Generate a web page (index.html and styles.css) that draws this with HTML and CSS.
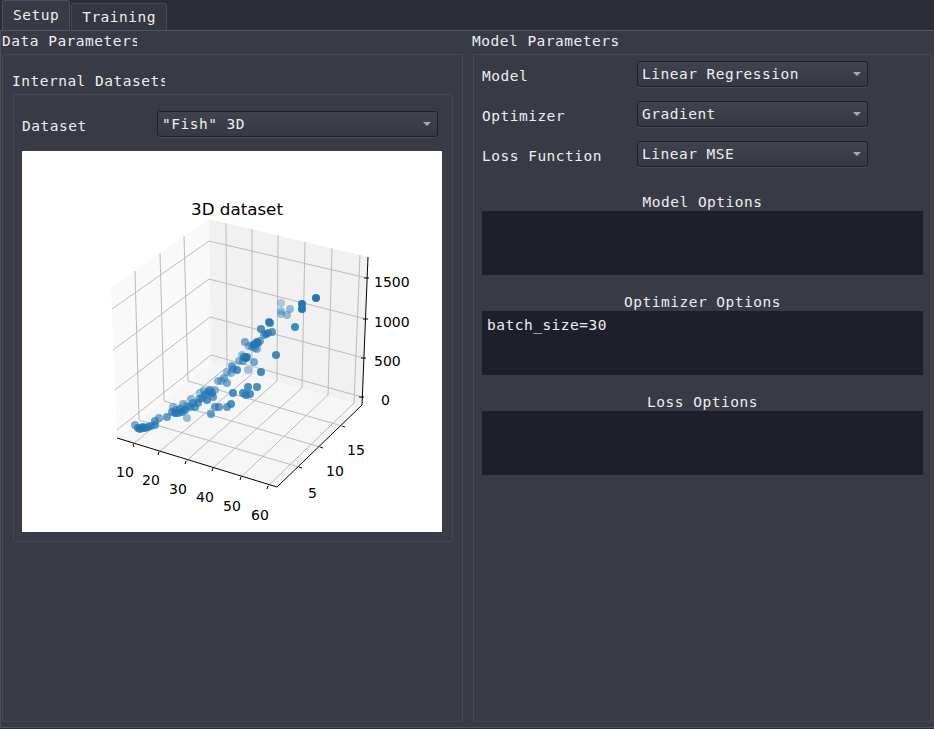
FILE: index.html
```html
<!DOCTYPE html>
<html lang="en">
<head>
    <meta charset="UTF-8">
    <title>Setup</title>
    <link rel="stylesheet" href="styles.css">
</head>
<body>
    <div class="tabbar">
        <div class="tab active">Setup</div>
        <div class="tab">Training</div>
    </div>

    <div class="pane">
        <section class="column">
            <div class="group-title data-title">Data Parameters</div>
            <div class="frame data-frame">
                <div class="group-title inner-title">Internal Datasets</div>
                <div class="frame inner-frame">
                    <div class="row dataset-row">
                        <label class="field-label">Dataset</label>
                        <div class="combo dataset-combo">"Fish" 3D</div>
                    </div>
                    <svg class="plot" viewBox="22 151 420 381" width="420" height="381">
                        <rect x="22" y="151" width="420" height="381" fill="#fff"/>
                        <polygon points="111,287 209,219 211,363 117,438" fill="#f9f9f9"/>
                        <polygon points="209,219 368,257 362,405 211,363" fill="#f1f1f1"/>
                        <polygon points="211,363 362,405 277,487 117,438" fill="#f6f6f6"/>

                        <g class="grid">
                            <path d="M209 241L367 278M209 279L366 319M210 317L364 358M211 355L362 397"/>
                            <path d="M209 241L112 309M209 279L113 350M210 317L115 390M211 355L117 430"/>
                            <path d="M226 223L227 367M252 229L252 374M278 235L277 381M305 242L302 388M332 248L328 395M360 255L354 403"/>
                            <path d="M135 271L139 420M160 253L164 401M184 236L188 381"/>
                            <path d="M299 467L139 420M320 447L164 401M342 426L188 381"/>
                            <path d="M133 444L227 367M159 452L252 374M186 461L277 381M213 468L302 388M241 477L328 395M268 486L354 403"/>
                        </g>

                        <g class="axis">
                            <path d="M117 438L277 487L362 405L368 257"/>
                            <path d="M133 444L134 447M159 452L158 455M186 461L185 464M213 468L212 471M241 477L240 480M268 486L267 489"/>
                            <path d="M299 467L302 468M320 447L323 448M342 426L345 427"/>
                            <path d="M364 278L369 278M363 319L368 319M361 358L366 358M359 397L364 397"/>
                        </g>

                        <g class="dots">
                            <circle cx="281" cy="303" r="4" opacity=".35"/>
                            <circle cx="290" cy="309" r="4" opacity=".45"/>
                            <circle cx="281" cy="311" r="4" opacity=".4"/>
                            <circle cx="281" cy="314" r="4" opacity=".4"/>
                            <circle cx="287" cy="315" r="4" opacity=".45"/>
                            <circle cx="316" cy="298" r="4"/>
                            <circle cx="302" cy="304" r="4"/>
                            <circle cx="302" cy="309" r="4"/>
                            <circle cx="295" cy="327" r="4" opacity=".85"/>
                            <circle cx="269" cy="322" r="4" opacity=".8"/>
                            <circle cx="270" cy="323" r="4" opacity=".8"/>
                            <circle cx="261" cy="329" r="4" opacity=".8"/>
                            <circle cx="272" cy="332" r="4" opacity=".75"/>
                            <circle cx="266" cy="334" r="4" opacity=".8"/>
                            <circle cx="264" cy="335" r="4" opacity=".6"/>
                            <circle cx="268" cy="333" r="4" opacity=".7"/>
                            <circle cx="245" cy="342" r="4" opacity=".6"/>
                            <circle cx="257" cy="342" r="4" opacity=".8"/>
                            <circle cx="255" cy="344" r="4" opacity=".8"/>
                            <circle cx="258" cy="343" r="4" opacity=".8"/>
                            <circle cx="253" cy="345" r="4" opacity=".7"/>
                            <circle cx="260" cy="341" r="4" opacity=".6"/>
                            <circle cx="257" cy="349" r="4" opacity=".5"/>
                            <circle cx="252" cy="347" r="4" opacity=".5"/>
                            <circle cx="249" cy="346" r="4" opacity=".5"/>
                            <circle cx="255" cy="348" r="4" opacity=".6"/>
                            <circle cx="276" cy="355" r="4" opacity=".85"/>
                            <circle cx="246" cy="358" r="4" opacity=".9"/>
                            <circle cx="244" cy="357" r="4" opacity=".8"/>
                            <circle cx="247" cy="357" r="4" opacity=".8"/>
                            <circle cx="242" cy="355" r="4" opacity=".4"/>
                            <circle cx="243" cy="361" r="4" opacity=".6"/>
                            <circle cx="239" cy="361" r="4" opacity=".5"/>
                            <circle cx="254" cy="362" r="4" opacity=".6"/>
                            <circle cx="248" cy="370" r="4" opacity=".4"/>
                            <circle cx="261" cy="372" r="4" opacity=".85"/>
                            <circle cx="237" cy="370" r="4" opacity=".8"/>
                            <circle cx="232" cy="366" r="4" opacity=".65"/>
                            <circle cx="233" cy="369" r="4" opacity=".6"/>
                            <circle cx="227" cy="372" r="4" opacity=".5"/>
                            <circle cx="231" cy="373" r="4" opacity=".5"/>
                            <circle cx="224" cy="378" r="4" opacity=".6"/>
                            <circle cx="218" cy="381" r="4" opacity=".5"/>
                            <circle cx="221" cy="381" r="4" opacity=".5"/>
                            <circle cx="227" cy="383" r="4" opacity=".6"/>
                            <circle cx="248" cy="387" r="4" opacity=".8"/>
                            <circle cx="257" cy="387" r="4" opacity=".8"/>
                            <circle cx="233" cy="393" r="4" opacity=".8"/>
                            <circle cx="243" cy="393" r="4" opacity=".8"/>
                            <circle cx="246" cy="395" r="4" opacity=".8"/>
                            <circle cx="250" cy="394" r="4" opacity=".8"/>
                            <circle cx="231" cy="404" r="4" opacity=".8"/>
                            <circle cx="227" cy="407" r="4" opacity=".7"/>
                            <circle cx="219" cy="407" r="4" opacity=".7"/>
                            <circle cx="215" cy="407" r="4" opacity=".7"/>
                            <circle cx="211" cy="414" r="4" opacity=".7"/>
                            <circle cx="215" cy="390" r="4" opacity=".5"/>
                            <circle cx="210" cy="390" r="4" opacity=".7"/>
                            <circle cx="208" cy="392" r="4" opacity=".7"/>
                            <circle cx="212" cy="393" r="4" opacity=".8"/>
                            <circle cx="213" cy="397" r="4" opacity=".7"/>
                            <circle cx="207" cy="400" r="4" opacity=".8"/>
                            <circle cx="205" cy="395" r="4" opacity=".7"/>
                            <circle cx="202" cy="398" r="4" opacity=".7"/>
                            <circle cx="204" cy="391" r="4" opacity=".5"/>
                            <circle cx="200" cy="393" r="4" opacity=".4"/>
                            <circle cx="199" cy="399" r="4" opacity=".6"/>
                            <circle cx="198" cy="403" r="4" opacity=".7"/>
                            <circle cx="195" cy="407" r="4" opacity=".7"/>
                            <circle cx="193" cy="403" r="4" opacity=".7"/>
                            <circle cx="191" cy="399" r="4" opacity=".45"/>
                            <circle cx="190" cy="407" r="4" opacity=".7"/>
                            <circle cx="187" cy="418" r="4" opacity=".45"/>
                            <circle cx="187" cy="406" r="4" opacity=".6"/>
                            <circle cx="185" cy="410" r="4" opacity=".8"/>
                            <circle cx="183" cy="404" r="4" opacity=".5"/>
                            <circle cx="182" cy="412" r="4" opacity=".8"/>
                            <circle cx="180" cy="409" r="4" opacity=".7"/>
                            <circle cx="178" cy="413" r="4" opacity=".8"/>
                            <circle cx="176" cy="410" r="4" opacity=".6"/>
                            <circle cx="175" cy="413" r="4" opacity=".8"/>
                            <circle cx="173" cy="407" r="4" opacity=".5"/>
                            <circle cx="172" cy="412" r="4" opacity=".7"/>
                            <circle cx="167" cy="417" r="4" opacity=".7"/>
                            <circle cx="159" cy="418" r="4" opacity=".6"/>
                            <circle cx="155" cy="421" r="4" opacity=".7"/>
                            <circle cx="155" cy="425" r="4" opacity=".7"/>
                            <circle cx="151" cy="426" r="4" opacity=".7"/>
                            <circle cx="148" cy="427" r="4" opacity=".8"/>
                            <circle cx="145" cy="428" r="4" opacity=".8"/>
                            <circle cx="143" cy="427" r="4" opacity=".8"/>
                            <circle cx="142" cy="428" r="4" opacity=".8"/>
                            <circle cx="140" cy="429" r="4" opacity=".8"/>
                            <circle cx="138" cy="428" r="4" opacity=".8"/>
                            <circle cx="135" cy="425" r="4" opacity=".6"/>
                        </g>

                        <g class="ticks">
                            <text x="374" y="287">1500</text>
                            <text x="374" y="327">1000</text>
                            <text x="374" y="366">500</text>
                            <text x="381" y="405">0</text>
                            <text x="116" y="477">10</text>
                            <text x="142" y="485">20</text>
                            <text x="169" y="494">30</text>
                            <text x="196" y="502">40</text>
                            <text x="223" y="511">50</text>
                            <text x="251" y="520">60</text>
                            <text x="308" y="498">5</text>
                            <text x="326" y="476">10</text>
                            <text x="347" y="455">15</text>
                        </g>
                        <text class="plot-title" x="237" y="215">3D dataset</text>
                    </svg>
                </div>
            </div>
        </section>

        <section class="column">
            <div class="group-title">Model Parameters</div>
            <div class="frame model-frame">
                <div class="row">
                    <label class="field-label">Model</label>
                    <div class="combo">Linear Regression</div>
                </div>
                <div class="row">
                    <label class="field-label">Optimizer</label>
                    <div class="combo">Gradient</div>
                </div>
                <div class="row">
                    <label class="field-label">Loss Function</label>
                    <div class="combo">Linear MSE</div>
                </div>

                <div class="options first">
                    <div class="options-title">Model Options</div>
                    <div class="options-box"></div>
                </div>
                <div class="options">
                    <div class="options-title">Optimizer Options</div>
                    <div class="options-box">batch_size=30</div>
                </div>
                <div class="options">
                    <div class="options-title">Loss Options</div>
                    <div class="options-box"></div>
                </div>
            </div>
        </section>
    </div>
</body>
</html>
```

FILE: styles.css
```css
* {
    box-sizing: border-box;
}
body {
    margin: 0;
    width: 934px;
    height: 729px;
    overflow: hidden;
    background-color: #2b2d39;
    color: #eceef0;
    font-family: "DejaVu Sans Mono", monospace;
    font-size: 14.5px;
    letter-spacing: 0.5px;
}
.tabbar {
    display: flex;
    align-items: flex-end;
    height: 30px;
    padding-left: 2px;
    gap: 1px;
}
.tab {
    height: 27px;
    padding: 5px 10px 0;
    background-color: #343641;
    border: 1px solid #464854;
    border-bottom: none;
    border-radius: 3px 3px 0 0;
}
.tab.active {
    height: 30px;
    padding-top: 6px;
    background-color: #383b46;
    border-color: #4c4e5a;
}
.pane {
    display: grid;
    grid-template-columns: 461px 459px;
    column-gap: 10px;
    height: 698px;
    padding-left: 1px;
    background-color: #383a45;
    border-top: 1px solid #50525e;
    border-left: 1px solid #4c4e5a;
    border-bottom: 1px solid #50525e;
}
.group-title {
    height: 23px;
    padding-top: 2px;
    line-height: 17px;
    white-space: nowrap;
    overflow: hidden;
}
.data-title {
    width: 135px;
}
.column:last-child .group-title {
    margin-left: -1px;
}
.frame {
    border: 1px solid #464853;
    border-radius: 2px;
}
.data-frame,
.model-frame {
    height: 668px;
}
.data-frame {
    padding: 16px 9px 0 10px;
}
.inner-title {
    width: 153px;
    margin-left: -1px;
}
.inner-frame {
    height: 448px;
    padding: 16px 8px 0;
}
.model-frame {
    padding: 6px 8px 0;
}
.row {
    display: flex;
    height: 26px;
    margin-bottom: 14px;
}
.field-label {
    width: 155px;
    padding-top: 7px;
    line-height: 17px;
}
.dataset-row .field-label {
    width: 135px;
}
.combo {
    position: relative;
    width: 231px;
    height: 26px;
    padding: 4px 4px 0;
    line-height: 17px;
    background: linear-gradient(#40424e, #363843);
    border: 1px solid #1e1f29;
    border-radius: 3px;
    box-shadow: 0 1px 0 #4a4c58;
}
.dataset-combo {
    width: 281px;
}
/* little arrow on the right of the combo */
.combo::after {
    content: "";
    position: absolute;
    right: 6px;
    top: 10px;
    border-left: 4.5px solid transparent;
    border-right: 4.5px solid transparent;
    border-top: 4px solid #a9abb2;
}
.plot {
    display: block;
}
.grid path {
    fill: none;
    stroke: #bbb;
    stroke-width: 1;
}
.axis path {
    fill: none;
    stroke: #000;
    stroke-width: 1;
}
.dots circle {
    fill: #1f77b4;
}
.ticks text,
.plot-title {
    font-family: "DejaVu Sans", sans-serif;
    letter-spacing: 0;
    fill: #000;
}
.ticks text {
    font-size: 14px;
}
.plot-title {
    font-size: 16.7px;
    text-anchor: middle;
}
.options {
    margin-top: 16px;
}
.options.first {
    margin-top: 24px;
}
.options-title {
    height: 20px;
    padding-top: 3px;
    line-height: 17px;
    text-align: center;
}
.options-box {
    height: 64px;
    padding: 6px 5px;
    line-height: 17px;
    background-color: #1f1f2b;
}
```
